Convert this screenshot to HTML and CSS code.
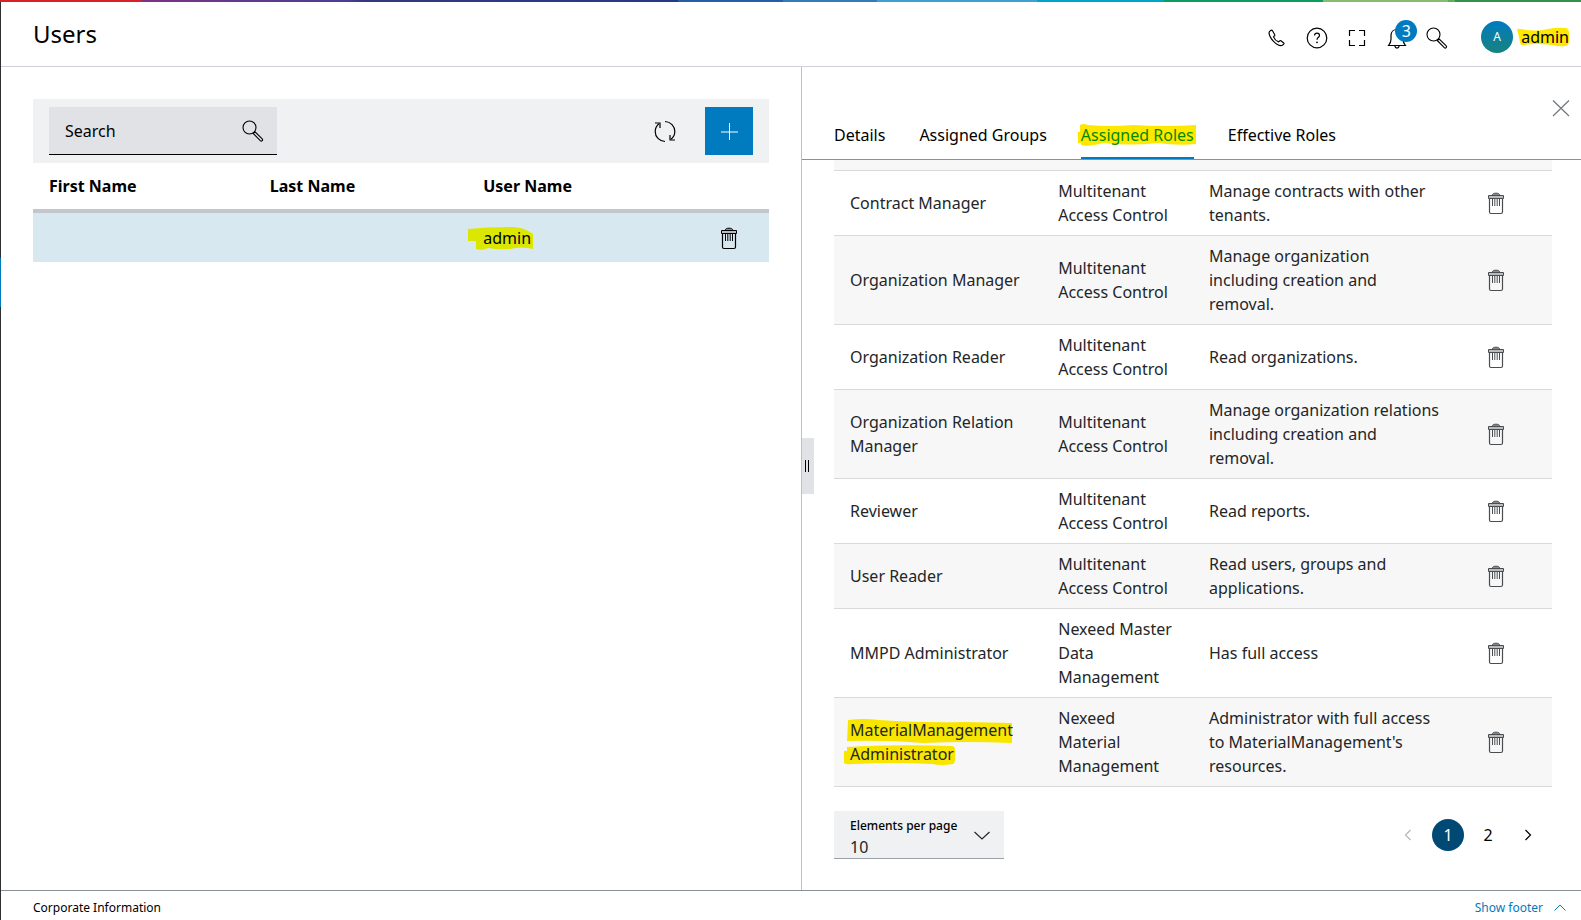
FILE: index.html
```html
<!DOCTYPE html>
<html lang="en">
<head>
<meta charset="utf-8">
<meta name="viewport" content="width=device-width, initial-scale=1">
<title>Users</title>
<link rel="stylesheet" href="styles.css">
</head>
<body>
<svg class="sprite" aria-hidden="true">
  <symbol id="trash" viewBox="0 0 24 24">
    <path d="M8 4.500C8.500 2.800 9.600 2.200 12 2.200s3.500.6 4 2.300z" fill="#8a8c8e" stroke="currentColor" stroke-width="1"/>
    <path d="M4.500 4.500h15v3h-15z" fill="#b9bbbd" stroke="currentColor" stroke-width="1"/>
    <path d="M5.500 7.500v13.500q0 1.500 1.500 1.500h10q1.500 0 1.500-1.500V7.500" fill="none" stroke="currentColor" stroke-width="1.200"/>
    <path d="M8.500 8v7M10.800 8v7M13.200 8v7M15.500 8v7" fill="none" stroke="currentColor" stroke-width="1"/>
  </symbol>
  <symbol id="lens" viewBox="0 0 24 24">
    <g fill="none" stroke="currentColor" stroke-width="1.100">
      <circle cx="8.500" cy="8.500" r="6.500"/>
      <path d="M12.300 14.500l7 7.200q1 .9 1.900 0t0-1.900l-7.200-7z"/>
    </g>
  </symbol>
</svg>
<div class="supergraphic"></div>
<div class="app">
  <header class="header">
    <h1 class="title">Users</h1>
    <div class="actions">
      <div class="icons">
        <button class="icon-btn" aria-label="Phone"><svg viewBox="0 0 24 24"><path d="M5.500 4.700L4.300 5.900c-.8 1.600.6 5.700 4 9.200s7.100 5.100 9.100 4.200l1.300-1.200c.4-.4.400-.9 0-1.200l-2.800-2.100c-.4-.3-.8-.3-1.100 0l-1.300 1.100c-1.800-.7-4.300-3.200-5-5l1.100-1.300c.3-.3.300-.7 0-1.100L7.500 4.800c-.6-.8-1.300-.8-2-.1z" fill="none" stroke="currentColor" stroke-width="1.200"/></svg></button>
        <button class="icon-btn" aria-label="Help"><svg viewBox="0 0 24 24"><g fill="none" stroke="currentColor" stroke-width="1.200"><circle cx="12" cy="12" r="9.800"/><path d="M9.500 9.600c0-1.500 1-2.500 2.500-2.500s2.500 1 2.500 2.300c0 1.900-2.500 2-2.500 4.300"/></g><circle cx="12" cy="16.300" r=".9" fill="currentColor"/></svg></button>
        <button class="icon-btn" aria-label="Full screen"><svg viewBox="0 0 24 24"><path d="M4.500 10V4.500H10M14 4.500h5.500V10M19.500 14v5.500H14M10 19.500H4.500V14" fill="none" stroke="currentColor" stroke-width="1.200"/></svg></button>
        <button class="icon-btn bell" aria-label="Notifications"><svg viewBox="0 0 24 24"><path d="M3.500 19.500c1.500-2 2.500-3.500 2.500-6V9.500c0-3.500 2.500-6 6-6s6 2.500 6 6v4c0 2.500 1 4 2.500 6zM9.800 19.800c.3 1.500 1 2.300 2.200 2.300s1.900-.8 2.200-2.300" fill="none" stroke="currentColor" stroke-width="1.200"/></svg><span class="badge">3</span></button>
        <button class="icon-btn" aria-label="Search"><svg><use href="#lens"/></svg></button>
      </div>
      <button class="account"><span class="avatar">A</span><span class="mark">admin<svg class="ink ink-account" viewBox="0 0 52 20" preserveAspectRatio="none"><path d="M0 3Q1 1 4 2 18 5 31 2 40 0 49 1q3 1 3 5v8q0 5-4 5-6 1-13-1-15-2-28 0-3 1-4-2l-1-6z"/></svg></span></button>
    </div>
  </header>
  <main class="main">
    <section class="users">
      <div class="toolbar">
        <div class="search"><input class="search-input" type="text" aria-label="Search" placeholder="Search"><button class="icon-btn" aria-label="Start search"><svg><use href="#lens"/></svg></button></div>
        <div class="tools">
          <button class="icon-btn" aria-label="Refresh"><svg viewBox="0 0 24 24"><g fill="none" stroke="currentColor" stroke-width="1.200"><path d="M12 2.500c5.700.3 9.800 4.500 9.800 10 0 3.300-1.300 5.800-3.800 7.800M12 22.500c-5.700-.3-9.800-4.500-9.800-10 0-3.300 1.300-5.800 3.800-7.800"/><path d="M17 16v5h5M7 9V4H2"/></g></svg></button>
          <button class="add" aria-label="Add user"><svg viewBox="0 0 24 24"><path d="M12.500 4v17M4 13h17" fill="none" stroke="currentColor"/></svg></button>
        </div>
      </div>
      <table class="user-table">
        <colgroup><col class="u-first"><col class="u-last"><col class="u-name"><col class="u-act"></colgroup>
        <thead><tr><th>First Name</th><th>Last Name</th><th>User Name</th><th></th></tr></thead>
        <tbody><tr><td></td><td></td><td><span class="mark">admin<svg class="ink ink-user" viewBox="0 0 65 23" preserveAspectRatio="none"><path d="M0 2Q20 0 45 0 58 1 65 7V22Q54 19 42 22 30 23 20 21 16 24 8 22V14H0z"/></svg></span></td><td><button class="icon-btn" aria-label="Delete admin"><svg><use href="#trash"/></svg></button></td></tr></tbody>
      </table>
    </section>
    <section class="detail">
      <button class="splitter" aria-label="Resize panels"><svg viewBox="0 0 12 12"><path d="M3.500 0v12M6.500 0v12" stroke="currentColor" fill="none"/></svg></button>
      <div class="close-row"><button class="icon-btn close" aria-label="Close"><svg viewBox="0 0 24 24"><path d="M4 4.500l16 15.500M20 4.500L4 20" stroke="currentColor" fill="none" stroke-width="1.200"/></svg></button></div>
      <nav class="tabs">
        <a class="tab" href="#details">Details</a>
        <a class="tab" href="#groups">Assigned Groups</a>
        <a class="tab active" href="#roles"><span class="mark">Assigned Roles<svg class="ink ink-tab" viewBox="0 0 118 22" preserveAspectRatio="none"><path d="M2 1Q5-1 10 1 30 3 55 1 90 3 118 1V20Q100 22 80 19 50 22 25 19 10 23 3 21V19H0V8H2z"/></svg></span></a>
        <a class="tab" href="#effective">Effective Roles</a>
      </nav>
      <div class="roles">
        <table class="role-table">
          <colgroup><col class="r-name"><col class="r-app"><col class="r-desc"><col class="r-act"></colgroup>
          <tbody>
            <tr class="clipped"><td colspan="4"></td></tr>
            <tr><td>Contract Manager</td><td>Multitenant Access Control</td><td>Manage contracts with other tenants.</td><td><button class="icon-btn" aria-label="Remove role"><svg><use href="#trash"/></svg></button></td></tr>
            <tr><td>Organization Manager</td><td>Multitenant Access Control</td><td>Manage organization<br>including creation and removal.</td><td><button class="icon-btn" aria-label="Remove role"><svg><use href="#trash"/></svg></button></td></tr>
            <tr><td>Organization Reader</td><td>Multitenant Access Control</td><td>Read organizations.</td><td><button class="icon-btn" aria-label="Remove role"><svg><use href="#trash"/></svg></button></td></tr>
            <tr><td>Organization Relation Manager</td><td>Multitenant Access Control</td><td>Manage organization relations including creation and removal.</td><td><button class="icon-btn" aria-label="Remove role"><svg><use href="#trash"/></svg></button></td></tr>
            <tr><td>Reviewer</td><td>Multitenant Access Control</td><td>Read reports.</td><td><button class="icon-btn" aria-label="Remove role"><svg><use href="#trash"/></svg></button></td></tr>
            <tr><td>User Reader</td><td>Multitenant Access Control</td><td>Read users, groups and applications.</td><td><button class="icon-btn" aria-label="Remove role"><svg><use href="#trash"/></svg></button></td></tr>
            <tr><td>MMPD Administrator</td><td>Nexeed Master Data Management</td><td>Has full access</td><td><button class="icon-btn" aria-label="Remove role"><svg><use href="#trash"/></svg></button></td></tr>
            <tr><td><span class="mark">MaterialManagement Administrator<svg class="ink ink-role" viewBox="0 0 168 46" preserveAspectRatio="none"><path d="M4 1Q20-1 35 1 80 4 120 3L168 4V24Q120 22 80 24 40 21 3 22z"/><path d="M3 28Q50 25 108 27 112 28 111 34 112 44 109 45 98 47 88 45 50 43 10 45 2 46 0 44V32H3z"/></svg></span></td><td>Nexeed Material Management</td><td>Administrator with full access to MaterialManagement's resources.</td><td><button class="icon-btn" aria-label="Remove role"><svg><use href="#trash"/></svg></button></td></tr>
          </tbody>
        </table>
        <div class="paging">
          <div class="page-size">
            <label class="size-label" for="size">Elements per page</label>
            <select class="size-select" id="size"><option>10</option><option>20</option><option>50</option></select>
            <svg class="size-arrow" viewBox="0 0 16 8"><path d="M.5.500L8 7.500 15.500.5" fill="none" stroke="currentColor" stroke-width="1.200"/></svg>
          </div>
          <nav class="pager" aria-label="Pages">
            <button class="page prev" aria-label="Previous page" disabled><svg viewBox="0 0 8 12"><path d="M6.500 1L1.500 6l5 5" fill="none" stroke="currentColor" stroke-width="1.200"/></svg></button>
            <button class="page current">1</button>
            <button class="page">2</button>
            <button class="page" aria-label="Next page"><svg viewBox="0 0 8 12"><path d="M1.500 1l5 5-5 5" fill="none" stroke="currentColor" stroke-width="1.200"/></svg></button>
          </nav>
        </div>
      </div>
    </section>
  </main>
  <footer class="footer">
    <a class="corporate" href="#corporate">Corporate Information</a>
    <button class="show-footer">Show footer<svg viewBox="0 0 12 7"><path d="M.5 6.500L6 1l5.500 5.500" fill="none" stroke="currentColor"/></svg></button>
  </footer>
</div>
</body>
</html>
```
FILE: styles.css
```css
* { box-sizing: border-box; }
body {
  margin: 0;
  min-height: 100vh;
  display: flex;
  flex-direction: column;
  background: #fff;
  color: #000;
  font: 16px/24px "Noto Sans", sans-serif;
}
button, input, select { font: inherit; color: inherit; }
button { padding: 0; border: 0; background: none; cursor: pointer; }
a { color: inherit; text-decoration: none; }
svg { display: block; }
.sprite { position: absolute; width: 0; height: 0; }

.supergraphic {
  height: 2px;
  background: linear-gradient(90deg,
    #d9202a 0 9%, #7b3286 9%, #4b3f92 22%, #35387d 23%, #263985 42.900%,
    #245ea6 42.900% 49.500%, #327db8 49.500% 55.500%, #3fa2cc 55.500% 65.600%,
    #00a4c7 65.600% 73.600%, #0d9b5e 73.600% 83.700%, #88bb6c 83.700% 91.600%,
    #59ae5f 91.600% 92%, #32914a 92%);
}
.app {
  flex: 1;
  display: flex;
  flex-direction: column;
  background: linear-gradient(#2e3033 0 256px, #007bc0 256px 305px, #2e3033 305px) left / 1px 100% no-repeat;
  padding-left: 1px;
}
.header {
  display: flex;
  justify-content: space-between;
  align-items: center;
  height: 65px;
  padding: 0 12px 0 32px;
  border-bottom: 1px solid #d0d0db;
}
.title { margin: 0; font-size: 24px; font-weight: 400; line-height: 32px; }
.actions { display: flex; align-items: center; gap: 32px; padding-top: 6px; }
.icons { display: flex; gap: 16px; padding-top: 2px; }
.icon-btn { display: block; width: 24px; height: 24px; flex: none; }
.icon-btn svg { width: 24px; height: 24px; }
.bell { position: relative; }
.badge {
  position: absolute;
  left: 10px;
  top: -6px;
  width: 22px;
  height: 22px;
  border-radius: 50%;
  background: #007bc0;
  color: #fff;
  font-size: 16px;
  line-height: 22px;
}
.account { display: flex; align-items: center; gap: 8px; }
.avatar {
  width: 32px;
  height: 32px;
  border-radius: 50%;
  background: linear-gradient(#007bc0, #18837e);
  color: #fff;
  font-size: 12px;
  line-height: 32px;
}
.mark { position: relative; z-index: 0; }
.ink { position: absolute; z-index: -1; fill: #ffe800; }
.ink-account { left: -4px; top: 2px; width: 52px; height: 20px; }
.ink-user { left: -15px; top: 0; width: 65px; height: 23px; fill: #dbe700; }
.ink-tab { left: -3px; top: 0; width: 118px; height: 22px; }
.ink-role { left: -6px; top: 0; width: 168px; height: 46px; fill: #f8e600; }

.main { flex: 1; display: grid; grid-template-columns: 800fr 780fr; }
.users { min-width: 0; padding: 32px; }
.toolbar {
  display: flex;
  justify-content: space-between;
  padding: 8px 16px;
  background: #eff1f2;
}
.search {
  display: flex;
  align-items: center;
  width: 228px;
  height: 48px;
  padding: 0 12px 0 16px;
  background: #e0e2e5;
  border-bottom: 1px solid #000;
}
.search-input { flex: 1; min-width: 0; padding: 0; border: 0; outline: 0; background: none; }
.search-input::placeholder { color: #000; opacity: 1; }
.tools { display: flex; align-items: center; gap: 28px; }
.add { width: 48px; height: 48px; background: #007bc0; color: #fff; }
.add svg { width: 24px; height: 24px; margin: 0 auto; }

table { width: 100%; table-layout: fixed; border-collapse: separate; border-spacing: 0; }
th, td { padding: 8px 16px; text-align: left; }
td .icon-btn { margin-left: auto; }
.u-first { width: 30%; }
.u-last { width: 29%; }
.u-name { width: 30%; }
.u-act { width: 11%; }
.user-table th { padding: 11px 16px; border-bottom: 4px solid #c1c7cc; }
.user-table td { height: 49px; background: #d8e8f0; }
.user-table td:last-child { padding: 0 28px 0 0; }

.detail {
  position: relative;
  min-width: 0;
  border-left: 1px solid #bfc0c7;
}
.splitter {
  position: absolute;
  left: 0;
  top: 371px;
  width: 12px;
  height: 56px;
  background: #e0e2e5;
}
.splitter svg { width: 12px; height: 12px; }
.close-row { display: flex; justify-content: flex-end; padding: 29px 8px 0 0; }
.close { color: #71767c; }
.tabs {
  display: flex;
  gap: 34px;
  padding: 0 32px;
  border-bottom: 1px solid #8a9097;
}
.tab { padding: 3px 0 10px; border-bottom: 2px solid transparent; }
.tab.active { color: #008a00; border-color: #007bc0; }
.roles { padding: 0 29px 0 32px; color: #232628; }
.r-name { width: 29%; }
.r-app { width: 21%; }
.r-desc { width: 35%; }
.r-act { width: 15%; }
.role-table td { border-bottom: 1px solid #d8d9da; }
.role-table td:nth-child(3) { padding-right: 0; }
.role-table td:last-child { padding-right: 44px; }
.role-table tr:nth-child(odd) td { background: #f7f7f7; }
.role-table .icon-btn { color: #4a4d50; }
.role-table .clipped td { height: 11px; padding: 0; }
.paging { display: flex; justify-content: space-between; align-items: center; padding: 24px 8px 31px 0; }
.page-size {
  position: relative;
  width: 170px;
  height: 48px;
  padding-top: 6px;
  background: #eff1f2;
  border-bottom: 1px solid #9aa1a8;
}
.size-label { display: block; padding-left: 16px; font-size: 12px; font-weight: 500; line-height: 18px; color: #000; }
.size-select {
  display: block;
  width: 100%;
  height: 20px;
  padding: 0 16px;
  border: 0;
  background: none;
  appearance: none;
}
.size-arrow { position: absolute; right: 14px; top: 20px; width: 16px; height: 9px; pointer-events: none; }
.pager { display: flex; gap: 8px; color: #000; }
.page { width: 32px; height: 32px; border-radius: 50%; line-height: 32px; }
.page svg { width: 8px; height: 12px; margin: 0 auto; }
.prev { color: #b5b8bb; }
.current { background: #004975; color: #fff; }

.footer {
  display: flex;
  justify-content: space-between;
  align-items: center;
  height: 30px;
  padding: 4px 15px 0 32px;
  border-top: 1px solid #8a9097;
  font-size: 12px;
  line-height: 24px;
}
.show-footer { display: flex; align-items: center; gap: 11px; color: #007bc0; }
.show-footer svg { width: 12px; height: 7px; }
```
